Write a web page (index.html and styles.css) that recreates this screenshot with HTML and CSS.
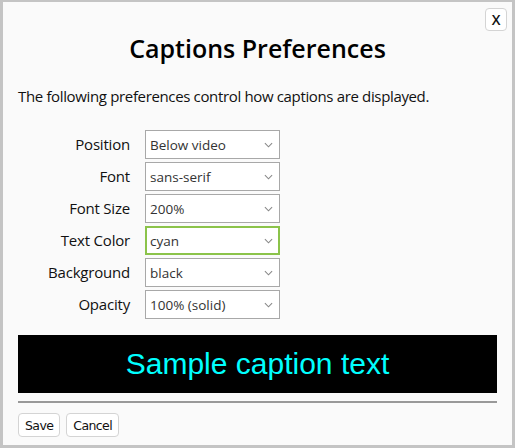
FILE: index.html
```html
<!DOCTYPE html>
<html>
<head>
<meta charset="utf-8">
<link rel="stylesheet" href="styles.css">
</head>
<body>
<div class="dialog">
  <button class="close">X</button>
  <h1 class="title">Captions Preferences</h1>
  <p class="intro">The following preferences control how captions are displayed.</p>
  <div class="form">
    <label class="lbl">Position</label>
    <div class="sel"><span>Below video</span><svg class="chev" viewBox="0 0 10 6"><path d="M1 1l4 4 4-4"/></svg></div>
    <label class="lbl">Font</label>
    <div class="sel"><span>sans-serif</span><svg class="chev" viewBox="0 0 10 6"><path d="M1 1l4 4 4-4"/></svg></div>
    <label class="lbl">Font Size</label>
    <div class="sel"><span>200%</span><svg class="chev" viewBox="0 0 10 6"><path d="M1 1l4 4 4-4"/></svg></div>
    <label class="lbl">Text Color</label>
    <div class="sel focus"><span>cyan</span><svg class="chev" viewBox="0 0 10 6"><path d="M1 1l4 4 4-4"/></svg></div>
    <label class="lbl">Background</label>
    <div class="sel"><span>black</span><svg class="chev" viewBox="0 0 10 6"><path d="M1 1l4 4 4-4"/></svg></div>
    <label class="lbl">Opacity</label>
    <div class="sel"><span>100% (solid)</span><svg class="chev" viewBox="0 0 10 6"><path d="M1 1l4 4 4-4"/></svg></div>
  </div>
  <div class="sample">Sample caption text</div>
  <div class="rule"></div>
  <div class="actions">
    <button class="btn">Save</button>
    <button class="btn">Cancel</button>
  </div>
</div>
</body>
</html>
```
FILE: styles.css
```css
html, body {
  margin: 0;
  padding: 0;
  background: #fafafa;
}
.dialog {
  position: relative;
  box-sizing: border-box;
  width: 515px;
  height: 448px;
  border: 3px solid #c4c4c4;
  border-top-width: 2px;
  background: #fafafa;
  padding: 0 15px;
  font-family: "Open Sans", "Noto Sans", sans-serif;
  color: #111;
}
.close {
  position: absolute;
  top: 6px;
  right: 5px;
  width: 22px;
  height: 23px;
  padding: 0;
  border: 1px solid #d4d4d4;
  border-radius: 4px;
  background: #fff;
  font-family: "Open Sans", sans-serif;
  font-size: 14px;
  font-weight: 600;
  color: #111;
}
.title {
  margin: 26px 0 0;
  text-align: center;
  font-size: 25px;
  font-weight: 600;
  line-height: 40px;
  color: #000;
}
.intro {
  margin: 17px 0 0;
  font-size: 15px;
  letter-spacing: -0.35px;
  line-height: 22px;
}
.form {
  display: grid;
  grid-template-columns: 112px 135px;
  column-gap: 15px;
  row-gap: 3px;
  margin-top: 23px;
}
.lbl {
  text-align: right;
  font-size: 15px;
  letter-spacing: -0.2px;
  line-height: 29px;
}
.sel {
  box-sizing: border-box;
  height: 29px;
  border: 1px solid #a8a8a8;
  background: #fff;
  display: flex;
  align-items: center;
  justify-content: space-between;
  padding: 0 6px 0 4px;
  font-size: 13.5px;
  color: #333;
}
.sel.focus {
  border: 2px solid #8bc34a;
  padding-left: 3px;
  padding-right: 5px;
}
.chev {
  width: 9px;
  height: 6px;
  fill: none;
  stroke: #888;
  stroke-width: 1.2;
}
.sample {
  margin-top: 16px;
  height: 58px;
  background: #000;
  color: #00ffff;
  font-family: "Liberation Sans", Arial, sans-serif;
  font-size: 30px;
  line-height: 58px;
  text-align: center;
}
.rule {
  margin-top: 8px;
  height: 2px;
  background: #999;
}
.actions {
  display: flex;
  gap: 6px;
  margin-top: 10px;
}
.btn {
  height: 24px;
  padding: 0 6px;
  border: 1px solid #d4d4d4;
  border-radius: 4px;
  background: #fff;
  font-family: "DejaVu Sans", Verdana, sans-serif;
  font-size: 12.5px;
  color: #111;
  letter-spacing: -0.6px;
}
```
